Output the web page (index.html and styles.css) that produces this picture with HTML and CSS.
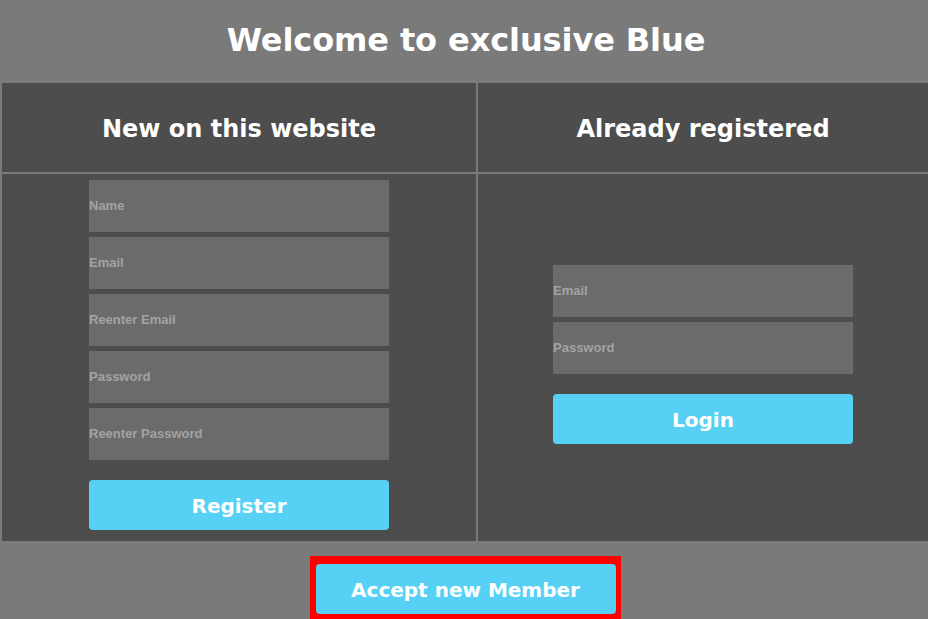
FILE: index.html
```html
<!DOCTYPE html>
<html>
<head>
<meta charset="utf-8">
<link rel="stylesheet" href="styles.css">
</head>
<body>
<header class="top"><h1 class="title">Welcome to exclusive Blue</h1></header>
<main class="panels">
  <div class="cell head"><h2 class="heading">New on this website</h2></div>
  <div class="cell head"><h2 class="heading">Already registered</h2></div>
  <div class="cell form-left">
    <input class="field" placeholder="Name">
    <input class="field" placeholder="Email">
    <input class="field" placeholder="Reenter Email">
    <input class="field" placeholder="Password">
    <input class="field" placeholder="Reenter Password">
    <button class="btn btn-register">Register</button>
  </div>
  <div class="cell form-right">
    <input class="field" placeholder="Email">
    <input class="field" placeholder="Password">
    <button class="btn btn-login">Login</button>
  </div>
</main>
<footer class="bottom">
  <div class="highlight"><button class="btn">Accept new Member</button></div>
</footer>
</body>
</html>
```
FILE: styles.css
```css
html, body {
  margin: 0;
  padding: 0;
  height: 100%;
  overflow: hidden;
}
body {
  background: #7a7a7a;
  font-family: "DejaVu Sans", Verdana, sans-serif;
  color: #fff;
}
.top {
  height: 83px;
  display: flex;
  align-items: center;
  justify-content: center;
}
.title {
  margin: 0 0 0 4px;
  font-size: 32px;
  font-weight: bold;
  line-height: 1;
  padding-bottom: 3px;
  letter-spacing: -0.1px;
}
.panels {
  display: grid;
  grid-template-columns: 474px 450px;
  grid-template-rows: 89px 367px;
  column-gap: 2px;
  row-gap: 2px;
  padding-left: 2px;
}
.cell {
  background: #4d4d4d;
}
.head {
  display: flex;
  align-items: center;
  justify-content: center;
}
.heading {
  margin: 0;
  font-size: 24px;
  font-weight: bold;
  line-height: 1;
  padding-top: 2px;
}
.form-left {
  display: flex;
  flex-direction: column;
  align-items: center;
  gap: 5px;
  padding-top: 6px;
  box-sizing: border-box;
}
.form-right {
  display: flex;
  flex-direction: column;
  align-items: center;
  justify-content: center;
  gap: 5px;
  padding-bottom: 6px;
  box-sizing: border-box;
}
.field {
  width: 300px;
  height: 52px;
  box-sizing: border-box;
  border: none;
  margin: 0;
  padding: 0 0 2px 0;
  background: #6b6b6b;
  font-family: "Liberation Sans", Arial, sans-serif;
  font-weight: bold;
  font-size: 13px;
  color: #ddd;
  outline: none;
}
.field::placeholder {
  color: #a3a3a3;
  opacity: 1;
}
.btn {
  width: 300px;
  height: 50px;
  border: none;
  border-radius: 4px;
  background: #56d1f5;
  color: #fff;
  font-family: "DejaVu Sans", Verdana, sans-serif;
  font-weight: bold;
  font-size: 20px;
  margin: 0;
  padding: 2px 0 0 0;
  cursor: pointer;
}
.btn-register {
  margin-top: 15px;
}
.btn-login {
  margin-top: 15px;
}
.bottom {
  display: flex;
  justify-content: center;
  padding-top: 15px;
  padding-left: 2px;
}
.highlight {
  background: #ff0000;
  padding: 8px 5px 6px 6px;
  display: flex;
}
```
